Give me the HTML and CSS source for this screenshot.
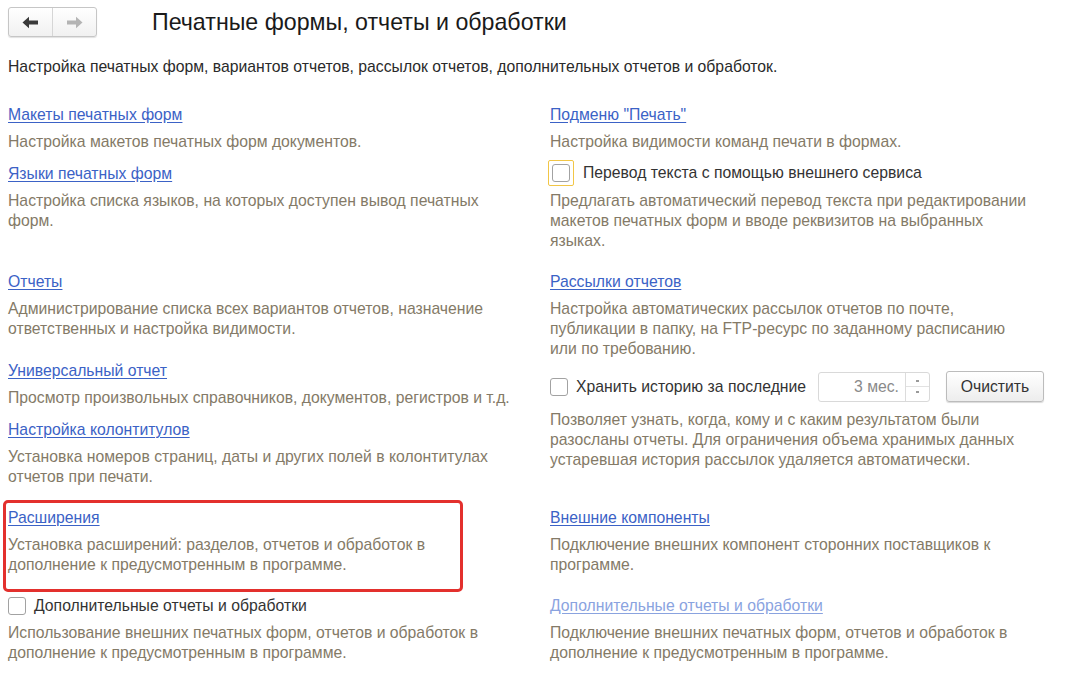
FILE: index.html
```html
<!DOCTYPE html>
<html lang="ru">
<head>
<meta charset="utf-8">
<title>Печатные формы, отчеты и обработки</title>
<link rel="stylesheet" href="styles.css">
</head>
<body>
<div class="page">
  <header class="header">
    <div class="nav">
      <button class="nav-btn" aria-label="Назад">
        <svg width="17" height="13" viewBox="0 0 17 13"><path d="M0.5 6.5 L7 0.8 L7 4.5 L16 4.5 L16 8.5 L7 8.5 L7 12.2 Z" fill="#3a3a3a"/></svg>
      </button>
      <button class="nav-btn" aria-label="Вперед">
        <svg width="17" height="13" viewBox="0 0 17 13"><path d="M16.5 6.5 L10 0.8 L10 4.5 L1 4.5 L1 8.5 L10 8.5 L10 12.2 Z" fill="#b4b4b4"/></svg>
      </button>
    </div>
    <h1 class="title">Печатные формы, отчеты и обработки</h1>
  </header>

  <p class="subtitle">Настройка печатных форм, вариантов отчетов, рассылок отчетов, дополнительных отчетов и обработок.</p>

  <div class="grid">
    <!-- group 1 -->
    <div class="cell">
      <a class="link" href="#">Макеты печатных форм</a>
      <p class="desc">Настройка макетов печатных форм документов.</p>
      <a class="link next" href="#">Языки печатных форм</a>
      <p class="desc">Настройка списка языков, на которых доступен вывод печатных форм.</p>
    </div>
    <div class="cell">
      <a class="link" href="#">Подменю "Печать"</a>
      <p class="desc">Настройка видимости команд печати в формах.</p>
      <label class="check-row focus-row">
        <span class="focus"><span class="box"></span></span>
        <span class="check-label">Перевод текста с помощью внешнего сервиса</span>
      </label>
      <p class="desc after-row">Предлагать автоматический перевод текста при редактировании макетов печатных форм и вводе реквизитов на выбранных языках.</p>
    </div>

    <!-- group 2 -->
    <div class="cell">
      <a class="link" href="#">Отчеты</a>
      <p class="desc">Администрирование списка всех вариантов отчетов, назначение ответственных и настройка видимости.</p>
      <a class="link next wide" href="#">Универсальный отчет</a>
      <p class="desc">Просмотр произвольных справочников, документов, регистров и т.д.</p>
      <a class="link next" href="#">Настройка колонтитулов</a>
      <p class="desc">Установка номеров страниц, даты и других полей в колонтитулах отчетов при печати.</p>
    </div>
    <div class="cell">
      <a class="link" href="#">Рассылки отчетов</a>
      <p class="desc">Настройка автоматических рассылок отчетов по почте, публикации в папку, на FTP-ресурс по заданному расписанию или по требованию.</p>
      <div class="history-row">
        <label class="check-row">
          <span class="box"></span>
          <span class="check-label">Хранить историю за последние</span>
        </label>
        <div class="spin">
          <span class="spin-value">3 мес.</span>
          <span class="spin-btns">
            <span class="spin-up"></span>
            <span class="spin-down"></span>
          </span>
        </div>
        <button class="btn">Очистить</button>
      </div>
      <p class="desc after-history">Позволяет узнать, когда, кому и с каким результатом были разосланы отчеты. Для ограничения объема хранимых данных устаревшая история рассылок удаляется автоматически.</p>
    </div>

    <!-- group 3 -->
    <div class="cell highlighted">
      <a class="link" href="#">Расширения</a>
      <p class="desc">Установка расширений: разделов, отчетов и обработок в дополнение к предусмотренным в программе.</p>
    </div>
    <div class="cell">
      <a class="link" href="#">Внешние компоненты</a>
      <p class="desc">Подключение внешних компонент сторонних поставщиков к программе.</p>
    </div>

    <!-- group 4 -->
    <div class="cell">
      <label class="check-row plain-row">
        <span class="box"></span>
        <span class="check-label">Дополнительные отчеты и обработки</span>
      </label>
      <p class="desc">Использование внешних печатных форм, отчетов и обработок в дополнение к предусмотренным в программе.</p>
    </div>
    <div class="cell">
      <a class="link disabled" href="#">Дополнительные отчеты и обработки</a>
      <p class="desc">Подключение внешних печатных форм, отчетов и обработок в дополнение к предусмотренным в программе.</p>
    </div>
  </div>
</div>
</body>
</html>
```

FILE: styles.css
```css
* { box-sizing: border-box; }

html, body {
  margin: 0;
  padding: 0;
  background: #ffffff;
}

body {
  font-family: "Liberation Sans", Arial, sans-serif;
  font-size: 15.75px;
  line-height: 20px;
  color: #333333;
}

.page {
  padding: 7px 8px 0 8px;
}

.header {
  display: flex;
  align-items: center;
  height: 30px;
}

.nav {
  display: flex;
  width: 89px;
  height: 30px;
  border: 1px solid #c6c6c6;
  border-radius: 3px;
  background: linear-gradient(#ffffff, #f1f1f1);
  box-shadow: 0 1px 1px rgba(0, 0, 0, 0.12);
  overflow: hidden;
}

.nav-btn {
  flex: 1;
  display: flex;
  align-items: center;
  justify-content: center;
  border: 0;
  padding: 0;
  background: transparent;
}

.nav-btn + .nav-btn {
  border-left: 1px solid #d6d6d6;
}

.title {
  margin: 0 0 0 55px;
  font-size: 23.2px;
  font-weight: normal;
  line-height: 30px;
  color: #1a1a1a;
}

.subtitle {
  margin: 20px 0 0 0;
  color: #2a2a2a;
}

.grid {
  display: grid;
  grid-template-columns: 505px 482px;
  column-gap: 37px;
  row-gap: 21px;
  margin-top: 28px;
  align-items: start;
}

.cell {
  display: flex;
  flex-direction: column;
  align-items: flex-start;
}

.link {
  color: #3b62c6;
  text-decoration: underline;
  text-underline-offset: 2px;
}

.link.disabled {
  color: #8aa3df;
}

.link.next {
  margin-top: 12px;
}

.link.next.wide {
  margin-top: 22px;
}

.desc {
  margin: 7px 0 0 0;
  color: #847a67;
}

.check-row {
  display: flex;
  align-items: center;
  gap: 8px;
  color: #333333;
}

.focus-row {
  margin-top: 8px;
  margin-left: -2px;
  gap: 9px;
}

.focus {
  display: flex;
  align-items: center;
  justify-content: center;
  width: 26px;
  height: 26px;
  border: 1px solid #f2c646;
  border-radius: 2px;
}

.box {
  display: block;
  width: 18px;
  height: 18px;
  border: 1px solid #a2a2a2;
  border-radius: 3px;
  background: #ffffff;
}

.desc.after-row {
  margin-top: 5px;
}

.history-row {
  display: flex;
  align-items: center;
  height: 31px;
  margin-top: 12px;
}

.history-row .check-row {
  width: 268px;
}

.spin {
  display: flex;
  width: 112px;
  height: 30px;
  border: 1px solid #d9d9d9;
  border-radius: 3px;
  background: #ffffff;
}

.spin-value {
  flex: 1;
  text-align: right;
  padding-right: 6px;
  line-height: 28px;
  color: #8a8a8a;
}

.spin-btns {
  display: flex;
  flex-direction: column;
  width: 24px;
  border-left: 1px solid #dcdcdc;
}

.spin-up, .spin-down {
  flex: 1;
  position: relative;
}

.spin-up {
  border-bottom: 1px solid #e2e2e2;
}

.spin-up::after, .spin-down::after {
  content: "";
  position: absolute;
  left: 10px;
  width: 3px;
  height: 2px;
  background: #9a9a9a;
}

.spin-up::after { bottom: 4px; }
.spin-down::after { top: 4px; }

.btn {
  margin-left: 16px;
  width: 98px;
  height: 31px;
  border: 1px solid #bcbcbc;
  border-radius: 3px;
  background: linear-gradient(#ffffff, #ededed);
  box-shadow: 0 1px 1px rgba(0, 0, 0, 0.15);
  font-family: "Liberation Sans", Arial, sans-serif;
  font-size: 15.75px;
  color: #333333;
  padding: 0;
}

.desc.after-history {
  margin-top: 8px;
}

.highlighted {
  position: relative;
}

.highlighted::before {
  content: "";
  position: absolute;
  left: -5px;
  top: -8px;
  width: 454px;
  height: 86px;
  border: 3px solid #e3302d;
  border-radius: 5px;
  pointer-events: none;
}

.plain-row {
  height: 20px;
}
```
